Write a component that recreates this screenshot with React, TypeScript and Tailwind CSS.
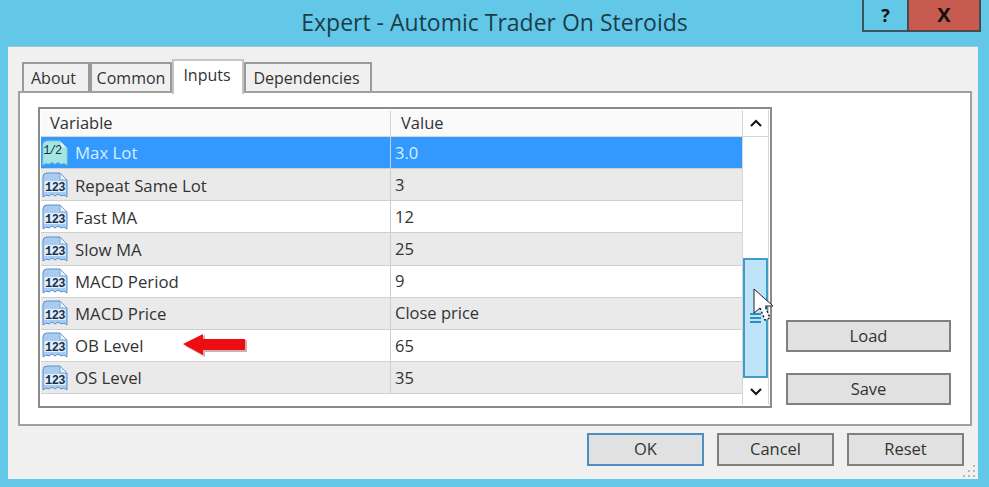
import React from "react";

const FONT = "font-['Open_Sans','Liberation_Sans',sans-serif]";

type Row = { name: string; value: string; selected?: boolean; grey?: boolean; arrow?: boolean };

const rows: Row[] = [
  { name: "Max Lot", value: "3.0", selected: true },
  { name: "Repeat Same Lot", value: "3", grey: true },
  { name: "Fast MA", value: "12" },
  { name: "Slow MA", value: "25", grey: true },
  { name: "MACD Period", value: "9" },
  { name: "MACD Price", value: "Close price", grey: true },
  { name: "OB Level", value: "65", arrow: true },
  { name: "OS Level", value: "35", grey: true },
];

function TypeIcon({ fraction }: { fraction?: boolean }) {
  const fill = fraction ? "#a6e6e0" : "#a9cdf0";
  const edge = fraction ? "#7fd0cf" : "#5a8fc8";
  return (
    <svg width="26" height="26" viewBox="0 0 26 26" className="shrink-0">
      <path
        d="M1 5 Q1 1 5 1 H18 L25 8 V25 L22 23 L19 24 L16 22 L13 24 L10 22 L7 24 L4 23 L1 25 Z"
        fill={fill}
        stroke={edge}
        strokeWidth="1"
      />
      <path d="M18 1 V8 H25 Z" fill="#e6f2fb" stroke={edge} strokeWidth="0.7" />
      {!fraction && <rect x="2.5" y="9" width="21" height="11" fill="#e3effa" />}
      <text
        x={fraction ? 10 : 13}
        y={fraction ? 14 : 18.5}
        textAnchor="middle"
        fontSize={fraction ? 12 : 12}
        fontWeight={fraction ? 400 : 700}
        fontFamily="'Liberation Mono', monospace"
        fill="#17324f"
        letterSpacing={fraction ? -1.4 : -0.5}
      >
        {fraction ? "1/2" : "123"}
      </text>
    </svg>
  );
}

function Button({ label, active, className }: { label: string; active?: boolean; className: string }) {
  const border = active ? "border-[#4f8fbf]" : "border-[#7f7f7f]";
  return (
    <div
      className={`flex items-center justify-center border-2 bg-[#e1e1e1] text-[16.5px] text-[#333] ${border} ${className}`}
    >
      {label}
    </div>
  );
}

function Tab({ label, active, className }: { label: string; active?: boolean; className: string }) {
  if (active) {
    return (
      <div
        className={`relative z-10 -mt-[3px] -mb-[3px] flex h-[35px] items-start justify-center border-2 border-b-0 border-[#c4c4c4] bg-white pt-[2px] text-[16px] text-[#333] ${className}`}
      >
        {label}
      </div>
    );
  }
  return (
    <div
      className={`flex h-[29px] items-center justify-center border-2 border-b-0 border-[#9a9a9a] bg-[#f0f0f0] text-[16px] text-[#333] ${className}`}
    >
      {label}
    </div>
  );
}

function ListRow({ row }: { row: Row }) {
  const bg = row.selected ? "bg-[#3399ff]" : row.grey ? "bg-[#eaeaea]" : "bg-white";
  const textColor = row.selected ? "text-[#d6f0ff]" : "text-[#333]";
  return (
    <div className={`flex h-[32.15px] border-b border-[#cfcfcf] ${bg}`}>
      <div className="relative flex w-[350px] items-center gap-[7px] border-r border-[#cfcfcf] pl-[1px]">
        <TypeIcon fraction={row.selected} />
        <span className={`pt-[1px] text-[16.8px] ${textColor}`}>{row.name}</span>
        {row.arrow && (
          <svg width="68" height="26" viewBox="0 0 68 26" className="absolute left-[140px] top-[2px]">
            <path d="M3 13 L23 2 V7 H65 V19 H23 V24 Z" fill="#7a1a1a" opacity="0.35" transform="translate(1 1)" />
            <path d="M2 12 L22 2 V7 H64 V18 H22 V23 Z" fill="#ee0d12" />
          </svg>
        )}
      </div>
      <div className={`flex flex-1 items-center pt-[1px] pl-[4px] text-[16.5px] ${textColor}`}>{row.value}</div>
    </div>
  );
}

function Scrollbar() {
  return (
    <div className="flex w-[27px] flex-col border-x border-[#d6d6d6] bg-white">
      <div className="flex h-[27px] items-center justify-center border-b border-[#d6d6d6]">
        <svg width="14" height="9" viewBox="0 0 14 9">
          <path d="M2 7 L7 2 L12 7" fill="none" stroke="#111" strokeWidth="2" />
        </svg>
      </div>
      <div className="h-[121px]" />
      <div className="flex h-[120px] items-center justify-center border-2 border-[#3f9cc9] bg-[#bfe3f8]">
        <div className="flex w-[11px] flex-col gap-[2px]">
          <div className="h-[2px] bg-[#2a8fc0]" />
          <div className="h-[2px] bg-[#2a8fc0]" />
          <div className="h-[2px] bg-[#2a8fc0]" />
        </div>
      </div>
      <div className="flex h-[27px] items-center justify-center">
        <svg width="14" height="9" viewBox="0 0 14 9">
          <path d="M2 2 L7 7 L12 2" fill="none" stroke="#111" strokeWidth="2" />
        </svg>
      </div>
    </div>
  );
}

function App() {
  return (
    <div className={`relative h-[487px] w-[989px] overflow-hidden bg-[#63c8e8] ${FONT}`}>
      {/* title bar */}
      <div className="grid h-[46px] grid-cols-[1fr_auto_1fr] items-start">
        <div />
        <div className="pt-[5px] text-[23px] leading-[34px] whitespace-nowrap text-[#1c3d48]">
          Expert - Automic Trader On Steroids
        </div>
        <div className="flex justify-end pr-[8px]">
          <div className="flex h-[32px] w-[45px] items-center justify-center border-b-2 border-l-2 border-[#3a5560] bg-[#63c8e8] text-[18px] font-bold text-[#111]">
            ?
          </div>
          <div className="flex h-[32px] w-[74px] items-center justify-center border-x-2 border-b-2 border-[#4a4a4a] bg-[#c75b50] text-[20px] font-bold text-[#111]">
            X
          </div>
        </div>
      </div>

      {/* client area */}
      <div className="relative mr-[11px] ml-[8px] h-[433px] border-t border-[#9fc4d2] bg-[#f0f0f0] pt-[15px] pr-[6px] pl-[10px]">
        <div className="flex pl-[4px]">
          <Tab label="About" className="w-[68px] pr-[5px]" />
          <Tab label="Common" className="w-[82px]" />
          <Tab label="Inputs" active className="w-[72px] pr-[2px]" />
          <Tab label="Dependencies" className="w-[128px] pr-[3px]" />
        </div>

        {/* panel */}
        <div className="flex h-[335px] items-start border-2 border-[#a0a0a0] bg-white pt-[14px] pl-[18px]">
          <div className="flex h-[301px] w-[734px] border-2 border-[#8a8a8a] bg-white p-[1px]">
            <div className="flex w-[702px] flex-col">
              <div className="flex h-[27px] border-b border-[#d6d6d6] bg-[#fafafa] pt-[1px] text-[16.5px] text-[#333]">
                <div className="flex w-[350px] items-center border-r border-[#d6d6d6] pl-[9px]">Variable</div>
                <div className="flex items-center pl-[10px]">Value</div>
              </div>
              {rows.map((row) => (
                <ListRow key={row.name} row={row} />
              ))}
            </div>
            <Scrollbar />
          </div>
          <div className="ml-[14px] flex flex-col gap-[21px] pt-[213px]">
            <Button label="Load" className="h-[32px] w-[165px]" />
            <Button label="Save" className="h-[32px] w-[165px]" />
          </div>
        </div>

        {/* bottom buttons */}
        <div className="flex justify-end gap-[13px] pt-[7px] pr-[8px]">
          <Button label="OK" active className="h-[33px] w-[117px]" />
          <Button label="Cancel" className="h-[33px] w-[117px]" />
          <Button label="Reset" className="h-[33px] w-[117px]" />
        </div>

        {/* resize grip */}
        <svg width="14" height="14" viewBox="0 0 14 14" className="absolute right-[1px] bottom-[1px]">
          <g fill="#b9b9b9">
            <rect x="10" y="1" width="2" height="2" />
            <rect x="5" y="6" width="2" height="2" />
            <rect x="10" y="6" width="2" height="2" />
            <rect x="0" y="11" width="2" height="2" />
            <rect x="5" y="11" width="2" height="2" />
            <rect x="10" y="11" width="2" height="2" />
          </g>
        </svg>
      </div>

      {/* mouse cursor */}
      <svg width="22" height="36" viewBox="0 0 22 36" className="absolute left-[753px] top-[288px]">
        <path d="M1 1 V25 L7 20 L12 32 L17 30 L12 18 L20 18 Z" fill="#fff" />
        <path d="M1 1 V25 L7 20 M12 18 L20 18 L1 1" fill="none" stroke="#222" strokeWidth="1" />
        <path d="M7 20 L12 32 L17 30 L12 18" fill="none" stroke="#222" strokeWidth="1.5" strokeDasharray="2 2" />
      </svg>
    </div>
  );
}

export default App;
